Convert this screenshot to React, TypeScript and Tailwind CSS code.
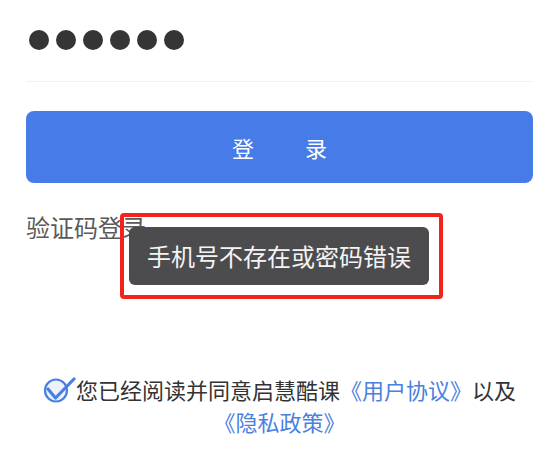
const CheckCircle = () => (
  <svg width="33" height="27" viewBox="0 0 33 27" className="inline-block align-[-5px]">
    <circle cx="13" cy="13.5" r="11" fill="#eef1f7" stroke="#4a7fe2" strokeWidth="2.2" />
    <path d="M5 12 L12.5 21 L31 2" fill="none" stroke="#4a7fe2" strokeWidth="3.2" strokeLinecap="round" strokeLinejoin="round" />
  </svg>
);

export default function App() {
  return (
    <div
      className="relative w-[559px] h-[473px] overflow-hidden bg-white px-[26px]"
      style={{ fontFamily: '"Noto Sans CJK SC", "Noto Sans", sans-serif' }}
    >
      {/* Password dots */}
      <div className="flex gap-[7px] pt-[30px] pl-[3px]">
        {Array.from({ length: 6 }).map((_, i) => (
          <span key={i} className="w-5 h-5 rounded-full bg-[#353535]" />
        ))}
      </div>
      <div className="mt-[31px] border-b border-[#f1f1f1]" />

      {/* Login button */}
      <button className="mt-[29px] w-full h-[72px] rounded-lg bg-[#477be8] flex items-center justify-center gap-[51px] text-[22px] leading-none text-white">
        <span>登</span>
        <span>录</span>
      </button>

      <div className="mt-[32px] text-[24px] leading-none text-[#5a5a5a]">验证码登录</div>

      {/* Agreement */}
      <p className="mt-[134px] text-center text-[22px] leading-[32px] text-[#333]">
        <CheckCircle />
        您已经阅读并同意启慧酷课<span className="text-[#4a80e0]">《用户协议》</span>以及
        <br />
        <span className="text-[#4a80e0]">《隐私政策》</span>
      </p>

      {/* Toast */}
      <div className="absolute left-[129px] top-[227px] w-[300px] h-[58px] rounded-md bg-[#4c4c4e] flex items-center justify-center text-[24px] leading-none text-[#f4f4f4]">
        手机号不存在或密码错误
      </div>
      {/* Red highlight frame */}
      <div className="absolute left-[120px] top-[213px] w-[323px] h-[86px] rounded-[4px] border-4 border-[#f3231b]" />
    </div>
  );
}
